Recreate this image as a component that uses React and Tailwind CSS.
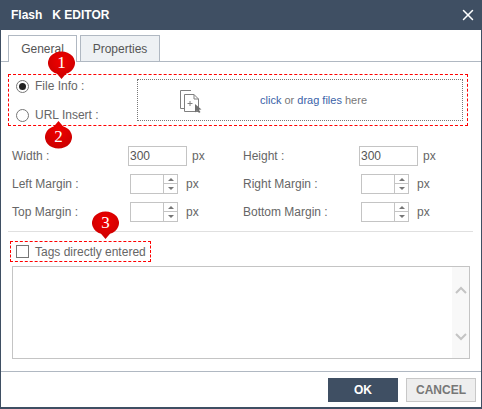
import {X} from "lucide-react";

const font = {fontFamily: '"Liberation Sans", Arial, sans-serif'};

// red marker pin with a number, sits over the form
const Marker = ({n, className, up}) => (
    <div className={`absolute w-[27px] h-[28px] ${className}`}>
        <svg width="27" height="28" viewBox="0 0 27 28" className="absolute left-0 top-0">
            <defs>
                <radialGradient id={`pin${n}`} cx="50%" cy="35%" r="70%">
                    <stop offset="0%" stopColor="#f00000" />
                    <stop offset="100%" stopColor="#c80000" />
                </radialGradient>
            </defs>
            {up ? (
                <path d="M13.5 0 L18 5.2 A13.5 11.5 0 1 1 9 5.2 Z" fill={`url(#pin${n})`} />
            ) : (
                <path d="M13.5 28 L9 22.8 A13.5 11.5 0 1 1 18 22.8 Z" fill={`url(#pin${n})`} />
            )}
        </svg>
        <span
            className={`absolute left-0 w-[27px] text-center text-white text-[17px] leading-[24px] ${up ? "top-[4px]" : "top-0"}`}
            style={{fontFamily: '"Liberation Serif", serif'}}
        >
            {n}
        </span>
    </div>
);

const Radio = ({checked}) => (
    <span className="w-[13px] h-[13px] rounded-full border border-[#767676] bg-white flex items-center justify-center shrink-0">
        {checked && <span className="w-[7px] h-[7px] rounded-full bg-[#222]" />}
    </span>
);

const TextBox = () => (
    <div className="w-[59px] h-[20px] border border-[#c4c4c4] text-[12px] leading-[18px] text-[#555] pl-[1px]">300</div>
);

const Spinner = () => (
    <div className="w-[48px] h-[20px] border border-[#c4c4c4] ml-[2px] flex justify-end">
        <div className="w-[14px] border-l border-[#c4c4c4] flex flex-col items-center">
            <div className="h-[9px] w-full flex items-center justify-center border-b border-[#c4c4c4]">
                <span className="w-0 h-0 border-x-[3px] border-x-transparent border-b-[3px] border-b-[#777]" />
            </div>
            <div className="flex-1 flex items-center justify-center">
                <span className="w-0 h-0 border-x-[3px] border-x-transparent border-t-[3px] border-t-[#777]" />
            </div>
        </div>
    </div>
);

const Field = ({label, spin}) => (
    <div className="flex items-center w-[231px] h-[20px]">
        <span className="w-[116px] text-[12px] text-[#666]">{label}</span>
        {spin ? <Spinner /> : <TextBox />}
        <span className={`text-[12px] text-[#666] ${spin ? "ml-[8px]" : "ml-[5px]"}`}>px</span>
    </div>
);

const App = () => {
    return (
        <div className="relative w-[482px] h-[409px] bg-white border-x border-b-2 border-[#3f4f63] flex flex-col overflow-hidden" style={font}>
            <div className="h-[30px] -mx-px bg-[#3f4f63] flex items-center justify-between pl-[11px] pr-[5px] shrink-0">
                <span className="text-[12px] font-bold text-white whitespace-nowrap">Flash<span className="ml-[10px]">K EDITOR</span></span>
                <X size={18} strokeWidth={2} className="text-white" />
            </div>

            {/* tabs */}
            <div className="flex items-end h-[32px] border-b border-[#b0b8c2] pl-[7px] gap-[3px] shrink-0">
                <div className="w-[69px] h-[27px] -mb-px bg-white border border-b-0 border-[#b0b8c2] text-[12px] text-[#555] flex items-center justify-center">General</div>
                <div className="w-[80px] h-[26px] bg-[#eef1f4] border border-b-0 border-[#b0b8c2] text-[12px] text-[#555] flex items-center justify-center">Properties</div>
            </div>

            {/* file source */}
            <div className="mt-[12px] ml-[7px] w-[460px] h-[52px] border border-dashed border-[#ff0000] flex items-center pl-[7px] pr-[4px] shrink-0">
                <div className="w-[121px] h-full flex flex-col justify-between pt-[2px] pb-[1px]">
                    <label className="flex items-center gap-[6px] text-[12px] text-[#666] h-[18px]"><Radio checked /> File Info :</label>
                    <label className="flex items-center gap-[6px] text-[12px] text-[#666] h-[18px]"><Radio /> URL Insert :</label>
                </div>
                <div className="flex-1 h-[42px] border border-dotted border-[#777] flex items-center">
                    <svg width="24" height="26" viewBox="0 0 24 26" className="ml-[41px]" fill="none">
                        <path d="M1.5 3.5 H12 M1.5 3.5 V21.5 H5.5" stroke="#808080" />
                        <path d="M5.5 7.5 H15 L19.5 12 V24.5 H5.5 Z" fill="#fff" stroke="#808080" />
                        <path d="M15 7.5 V12 H19.5" stroke="#808080" />
                        <path d="M8.5 16.5 H13.5 M11 14 V19" stroke="#808080" />
                        <path d="M16 17 L16 25.5 L18 23.5 L20 26 L21.5 25 L19.8 22.8 L22.5 22.5 Z" fill="#707070" />
                    </svg>
                    <span className="ml-[57px] text-[11px] text-[#777]">
                        <span className="text-[#3a62a8]">click</span> or <span className="text-[#3a62a8]">drag files</span> here
                    </span>
                </div>
            </div>

            {/* size and margins */}
            <div className="mt-[20px] ml-[11px] grid grid-cols-[231px_231px] gap-y-[8px] shrink-0">
                <Field label="Width :" />
                <Field label="Height :" />
                <Field label="Left Margin :" spin />
                <Field label="Right Margin :" spin />
                <Field label="Top Margin :" spin />
                <Field label="Bottom Margin :" spin />
            </div>

            <div className="mt-[9px] ml-[7px] w-[465px] border-t border-[#e0e0e0] shrink-0" />

            <div className="mt-[9px] ml-[9px] w-[141px] h-[21px] border border-dashed border-[#ff0000] flex items-center pl-[5px] gap-[6px] shrink-0">
                <span className="w-[13px] h-[13px] border border-[#767676] bg-white shrink-0" />
                <span className="text-[12px] text-[#666] whitespace-nowrap">Tags directly entered</span>
            </div>

            <div className="mt-[4px] ml-[11px] w-[458px] h-[93px] border border-[#c4c4c4] flex justify-end shrink-0">
                <div className="w-[17px] h-full bg-[#f8f8f8] flex flex-col justify-between items-center pt-[19px] pb-[17px]">
                    <svg width="12" height="8" viewBox="0 0 12 8" fill="none"><path d="M1 7 L6 2 L11 7" stroke="#c4c4c4" strokeWidth="2" /></svg>
                    <svg width="12" height="8" viewBox="0 0 12 8" fill="none"><path d="M1 1 L6 6 L11 1" stroke="#c4c4c4" strokeWidth="2" /></svg>
                </div>
            </div>

            <div className="mt-[12px] -mx-px border-t border-[#b0b8c2] flex justify-end gap-[8px] pt-[6px] pr-[6px] flex-1">
                <button className="w-[70px] h-[24px] bg-[#3f4f63] text-white text-[12px] font-bold">OK</button>
                <button className="w-[70px] h-[24px] bg-[#eeeeee] border border-[#c8c8c8] text-[#777] text-[12px] font-bold">CANCEL</button>
            </div>

            <Marker n="1" className="left-[47px] top-[51px]" />
            <Marker n="2" className="left-[44px] top-[121px]" up />
            <Marker n="3" className="left-[91px] top-[211px]" />
        </div>
    );
};

export default App;
